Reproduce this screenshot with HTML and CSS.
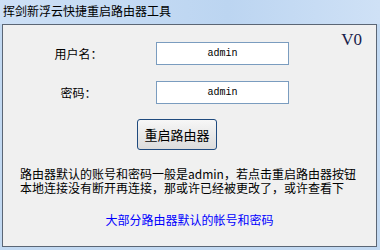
FILE: index.html
```html
<!DOCTYPE html>
<html lang="zh-CN">
<head>
<meta charset="UTF-8">
<meta name="viewport" content="width=device-width, initial-scale=1.0">
<title>挥剑新浮云快捷重启路由器工具</title>
<link rel="stylesheet" href="styles.css">
</head>
<body>
<div class="window">
    <div class="title-bar">挥剑新浮云快捷重启路由器工具</div>
    <div class="client">
        <div class="form">
            <label class="label" for="user">用户名：</label>
            <input class="field" type="text" id="user" value="admin">
            <span class="version">V0</span>
            <label class="label" for="pwd">密码：</label>
            <input class="field" type="text" id="pwd" value="admin">
        </div>
        <button type="button" class="restart">重启路由器</button>
        <p class="note">路由器默认的账号和密码一般是admin，若点击重启路由器按钮<br>本地连接没有断开再连接，那或许已经被更改了，或许查看下</p>
        <a class="link" href="#">大部分路由器默认的帐号和密码</a>
    </div>
</div>
</body>
</html>
```

FILE: styles.css
```css
body {
    margin: 0;
    background-color: #c2d9f2;
    font-family: "Noto Sans CJK SC", sans-serif;
    font-size: 12px;
    color: #000;
}
.window {
    width: 380px;
    height: 250px;
    overflow: hidden;
}
.title-bar {
    height: 24px;
    padding-left: 3px;
    line-height: 22px;
    font-size: 12px;
    background: linear-gradient(to right, #cde0f6, #bcd5f1 60%, #cfe1f6);
}
.client {
    margin: 0 3px 0 2px;
    height: 221px;
    border: 1px solid #5b6675;
    background-color: #f0f0f0;
    display: flex;
    flex-direction: column;
}
.form {
    display: grid;
    grid-template-columns: 101px 133px 1fr;
    grid-template-rows: 23px 23px;
    column-gap: 27px;
    row-gap: 16px;
    padding: 17px 14px 0 25px;
    align-items: center;
}
.label {
    text-align: center;
}
.field {
    box-sizing: border-box;
    width: 133px;
    height: 23px;
    margin: 0;
    padding: 0;
    border: 1px solid #7a9cbf;
    background: #fff;
    text-align: center;
    font-family: "Liberation Mono", monospace;
    font-size: 10px;
    color: #000;
}
.version {
    align-self: start;
    justify-self: end;
    margin-top: -12px;
    font-family: "Liberation Serif", serif;
    font-size: 17px;
    color: #18204a;
}
.restart {
    box-sizing: border-box;
    width: 80px;
    height: 31px;
    margin: 15px 0 0 134px;
    padding: 0;
    border: 1px solid #1f4a7e;
    border-radius: 3px;
    background: linear-gradient(#f7f7f7, #e9e9e9 50%, #dcdcdc);
    font-family: "Noto Sans CJK SC", sans-serif;
    font-size: 13px;
    color: #000;
}
.note {
    margin: 17px 0 0 17px;
    line-height: 14px;
    font-size: 12px;
}
.link {
    margin-top: 18px;
    text-align: center;
    color: #0000ff;
    text-decoration: none;
    line-height: 14px;
}
```
